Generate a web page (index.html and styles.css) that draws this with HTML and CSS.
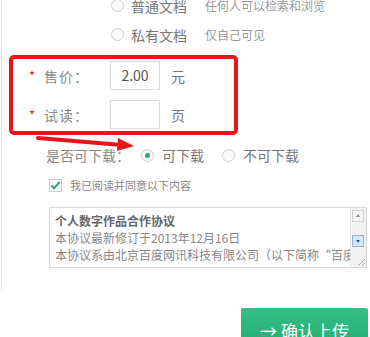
FILE: index.html
```html
<!DOCTYPE html>
<html lang="zh-CN">
<head>
    <meta charset="UTF-8">
    <title>上传文档</title>
    <link rel="stylesheet" href="styles.css">
</head>
<body>
    <div class="page">
        <div class="form">
            <div class="doc-type">
                <div class="radio-row">
                    <span class="radio"></span>
                    <span class="opt">普通文档</span>
                    <span class="hint">任何人可以检索和浏览</span>
                </div>
                <div class="radio-row">
                    <span class="radio"></span>
                    <span class="opt">私有文档</span>
                    <span class="hint">仅自己可见</span>
                </div>
            </div>

            <div class="price">
                <div class="field">
                    <span class="star">*</span>
                    <span class="label">售价：</span>
                    <span class="input">2.00</span>
                    <span class="unit">元</span>
                </div>
                <div class="field">
                    <span class="star">*</span>
                    <span class="label">试读：</span>
                    <span class="input"></span>
                    <span class="unit">页</span>
                </div>
                <div class="mark-box"></div>
            </div>

            <div class="download">
                <span class="label-wide">是否可下载：</span>
                <span class="radio checked"></span>
                <span class="opt">可下载</span>
                <span class="radio"></span>
                <span class="opt">不可下载</span>
                <svg class="mark-arrow" width="110" height="20" viewBox="0 0 110 20">
                    <path d="M2 3 L86 10" stroke="#e8141b" stroke-width="4" fill="none" stroke-linecap="round"/>
                    <path d="M82 3 L98 11 L81 16 Z" fill="#e8141b"/>
                </svg>
            </div>

            <div class="agree">
                <span class="check">
                    <svg width="12" height="12" viewBox="0 0 12 12">
                        <path d="M1.5 6.5 L4.5 9.5 L10.5 2.5" stroke="#2aa56e" stroke-width="2.2" fill="none"/>
                    </svg>
                </span>
                <span>我已阅读并同意以下内容</span>
            </div>

            <div class="terms">
                <div class="terms-text">
                    <p class="title">个人数字作品合作协议</p>
                    <p>本协议最新修订于2013年12月16日</p>
                    <p>本协议系由北京百度网讯科技有限公司（以下简称“百度”）</p>
                </div>
                <div class="scroll">
                    <span class="btn-up"></span>
                    <span class="btn-down"></span>
                    <span class="grip"></span>
                </div>
            </div>
        </div>

        <div class="actions">
            <button class="submit">→ 确认上传</button>
        </div>
    </div>
</body>
</html>
```

FILE: styles.css
```css
body {
    margin: 0;
    font-family: "Noto Sans CJK SC", "Noto Sans", sans-serif;
    background: white;
    color: #666;
    overflow: hidden;
}

.page {
    width: 368px;
    padding-top: 1px;
}

.form {
    height: 299px;
    margin-left: 1px;
    border-left: 1px solid #ececec;
}

.doc-type {
    margin-top: -10px;
    padding-left: 109px;
}

.radio-row {
    display: flex;
    align-items: center;
    height: 29px;
}

.radio {
    width: 13px;
    height: 13px;
    border: 1px solid #cfcfcf;
    border-radius: 50%;
    box-sizing: border-box;
    margin-right: 7px;
    background: #fafafa;
    position: relative;
}

.radio.checked::after {
    content: "";
    position: absolute;
    left: 3px;
    top: 3px;
    width: 5px;
    height: 5px;
    border-radius: 50%;
    background: #2aa56e;
}

.opt {
    font-size: 14px;
    color: #777;
}

.hint {
    font-size: 12px;
    color: #999;
    margin-left: 18px;
}

.price {
    position: relative;
    margin-top: 12px;
}

.field {
    display: flex;
    align-items: center;
    height: 29px;
    margin-bottom: 10px;
}

.star {
    width: 15px;
    margin-left: 27px;
    color: #e8141b;
    font-size: 13px;
}

.label {
    width: 66px;
    font-size: 14px;
    color: #888;
    letter-spacing: 1px;
}

.input {
    width: 50px;
    height: 29px;
    box-sizing: border-box;
    border: 1px solid #dcdcdc;
    font-size: 14px;
    color: #555;
    text-align: center;
    line-height: 27px;
}

.unit {
    margin-left: 11px;
    font-size: 14px;
    color: #777;
}

.mark-box {
    position: absolute;
    left: 7px;
    top: -6px;
    width: 221px;
    height: 72px;
    border: 4px solid #e8141b;
    border-radius: 5px;
}

.download {
    display: flex;
    align-items: center;
    height: 22px;
    margin-top: 15px;
    padding-left: 44px;
    position: relative;
}

.label-wide {
    width: 95px;
    font-size: 14px;
    color: #888;
}

.download .radio {
    margin-right: 8px;
}

.download .opt {
    margin-right: 18px;
}

.mark-arrow {
    position: absolute;
    left: 34px;
    top: -9px;
}

.agree {
    display: flex;
    align-items: center;
    margin-top: 10px;
    padding-left: 47px;
    font-size: 11px;
    color: #888;
    height: 18px;
}

.check {
    width: 13px;
    height: 13px;
    border: 1px solid #ccc;
    box-sizing: border-box;
    margin-right: 8px;
    display: flex;
    align-items: center;
    justify-content: center;
    background: #fafafa;
}

.terms {
    display: flex;
    margin: 13px 0 0 47px;
    width: 318px;
    height: 61px;
    border: 1px solid #d8d8d8;
    box-sizing: border-box;
}

.terms-text {
    flex: 1;
    overflow: hidden;
    padding: 4px 0 0 5px;
    font-size: 12px;
    line-height: 17px;
    color: #888;
    white-space: nowrap;
}

.terms-text p {
    margin: 0;
}

.terms-text .title {
    font-weight: bold;
    color: #666;
}

.scroll {
    width: 15px;
    background: #f3f3f3;
    position: relative;
    border-left: 1px solid #e6e6e6;
}

.btn-up,
.btn-down {
    position: absolute;
    left: 1px;
    width: 12px;
    height: 12px;
    box-sizing: border-box;
    border: 1px solid #cfcfcf;
    background: #f7f7f7;
}

.btn-up {
    top: 2px;
}

.btn-down {
    top: 27px;
    background: #d6e8f7;
    border-color: #8fb4d6;
}

.btn-up::after,
.btn-down::after {
    content: "";
    position: absolute;
    left: 3px;
    border-left: 2px solid transparent;
    border-right: 2px solid transparent;
}

.btn-up::after {
    top: 3px;
    border-bottom: 3px solid #888;
}

.btn-down::after {
    top: 4px;
    border-top: 3px solid #2a5f8f;
}

.grip {
    position: absolute;
    right: 1px;
    bottom: 1px;
    width: 7px;
    height: 7px;
    background: linear-gradient(135deg, transparent 45%, #aaa 45%, #aaa 55%, transparent 55%, transparent 75%, #aaa 75%, #aaa 85%, transparent 85%);
}

.actions {
    display: flex;
    justify-content: flex-end;
    margin-top: 18px;
}

.submit {
    width: 127px;
    height: 40px;
    border: none;
    border-radius: 2px;
    background: linear-gradient(#33c088, #27ac72);
    color: white;
    font-family: "Noto Sans CJK SC", sans-serif;
    font-size: 17px;
    padding: 4px 0 0 0;
}
```
